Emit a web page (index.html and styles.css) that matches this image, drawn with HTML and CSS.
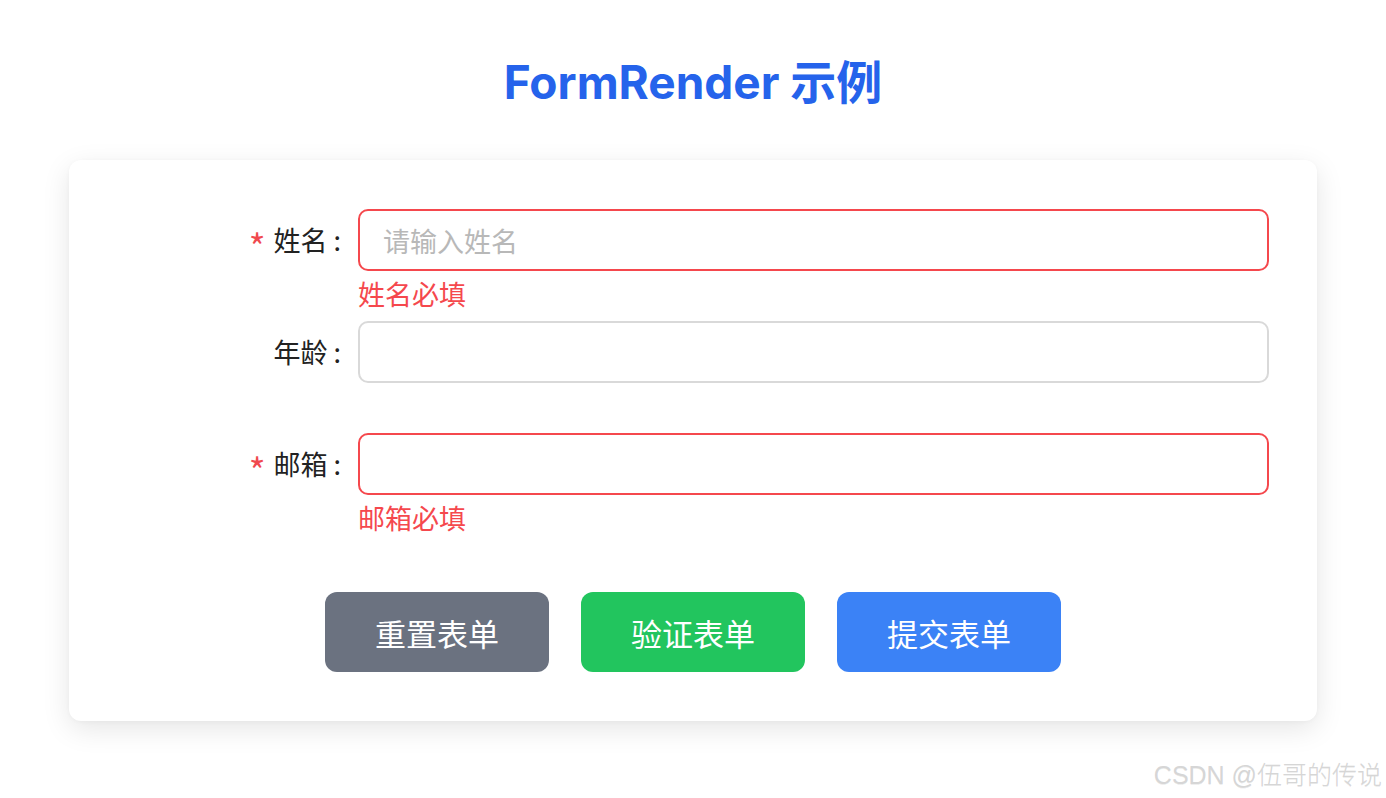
FILE: index.html
```html
<!DOCTYPE html>
<html lang="zh-CN">
<head>
<meta charset="UTF-8">
<title>FormRender 示例</title>
<link rel="stylesheet" href="styles.css">
</head>
<body>
<div class="page">
  <h1 class="title">FormRender 示例</h1>
  <div class="card">
    <form class="form">
      <div class="form-item">
        <label class="label"><span class="req">*</span>姓名<span class="colon">:</span></label>
        <div class="field">
          <input class="input input-error" type="text" placeholder="请输入姓名">
          <div class="error">姓名必填</div>
        </div>
      </div>
      <div class="form-item">
        <label class="label">年龄<span class="colon">:</span></label>
        <div class="field">
          <input class="input" type="text">
          <div class="error"></div>
        </div>
      </div>
      <div class="form-item">
        <label class="label"><span class="req">*</span>邮箱<span class="colon">:</span></label>
        <div class="field">
          <input class="input input-error" type="text">
          <div class="error">邮箱必填</div>
        </div>
      </div>
      <div class="actions">
        <button type="button" class="btn btn-gray">重置表单</button>
        <button type="button" class="btn btn-green">验证表单</button>
        <button type="button" class="btn btn-blue">提交表单</button>
      </div>
    </form>
  </div>
  <div class="watermark">CSDN @伍哥的传说</div>
</div>
</body>
</html>
```
FILE: styles.css
```css
html, body {
  margin: 0;
  padding: 0;
  background: #ffffff;
}
body {
  font-family: Inter, "Noto Sans CJK SC", sans-serif;
  width: 1386px;
  height: 798px;
  overflow: hidden;
}
.page {
  position: relative;
  height: 798px;
  padding-top: 54px;
  box-sizing: border-box;
}
.title {
  margin: 0;
  text-align: center;
  font-size: 46px;
  line-height: 56px;
  font-weight: 700;
  color: #2563eb;
  font-family: Inter, "Noto Sans CJK SC", sans-serif;
}
.card {
  width: 1248px;
  margin: 50px auto 0;
  box-sizing: border-box;
  padding: 49px 48px 49px;
  background: #fff;
  border-radius: 12px;
  box-shadow: 0 8px 28px rgba(0, 0, 0, 0.10), 0 1px 4px rgba(0, 0, 0, 0.03);
}
.form {
  margin: 0;
}
.form-item {
  display: flex;
  align-items: flex-start;
}
.label {
  width: 241px;
  flex: none;
  box-sizing: border-box;
  padding-right: 17px;
  text-align: right;
  font-family: "Noto Sans CJK SC", sans-serif;
  font-size: 27px;
  line-height: 62px;
  color: #222;
}
.req {
  display: inline-block;
  color: #f0494f;
  font-size: 36px;
  line-height: 0;
  vertical-align: -10px;
  margin-right: 8px;
}
.colon {
  margin-left: 6px;
}
.field {
  flex: 1;
  display: flex;
  flex-direction: column;
}
.input {
  display: block;
  width: 100%;
  height: 62px;
  box-sizing: border-box;
  border: 2px solid #d9d9d9;
  border-radius: 10px;
  padding: 0 23px;
  font-family: "Noto Sans CJK SC", sans-serif;
  font-size: 27px;
  color: #222;
  background: #fff;
  outline: none;
}
.input::placeholder {
  color: #b8b8b8;
}
.input-error {
  border-color: #f5484d;
}
.error {
  height: 50px;
  line-height: 46px;
  font-family: "Noto Sans CJK SC", sans-serif;
  font-size: 27px;
  color: #f5484d;
}
.actions {
  display: flex;
  justify-content: center;
  gap: 32px;
  margin-top: 47px;
}
.btn {
  width: 224px;
  height: 80px;
  border: none;
  border-radius: 12px;
  color: #fff;
  font-family: "Noto Sans CJK SC", sans-serif;
  font-size: 31px;
  cursor: pointer;
}
.btn-gray { background: #6b7280; }
.btn-green { background: #22c55e; }
.btn-blue { background: #3b82f6; }
.watermark {
  position: absolute;
  right: 4px;
  bottom: 7px;
  font-family: "Liberation Sans", "Noto Sans CJK SC", sans-serif;
  font-size: 25px;
  font-weight: 300;
  color: #d6d6d6;
  text-shadow: 0 1px 0 rgba(0, 0, 0, 0.07);
}
```
